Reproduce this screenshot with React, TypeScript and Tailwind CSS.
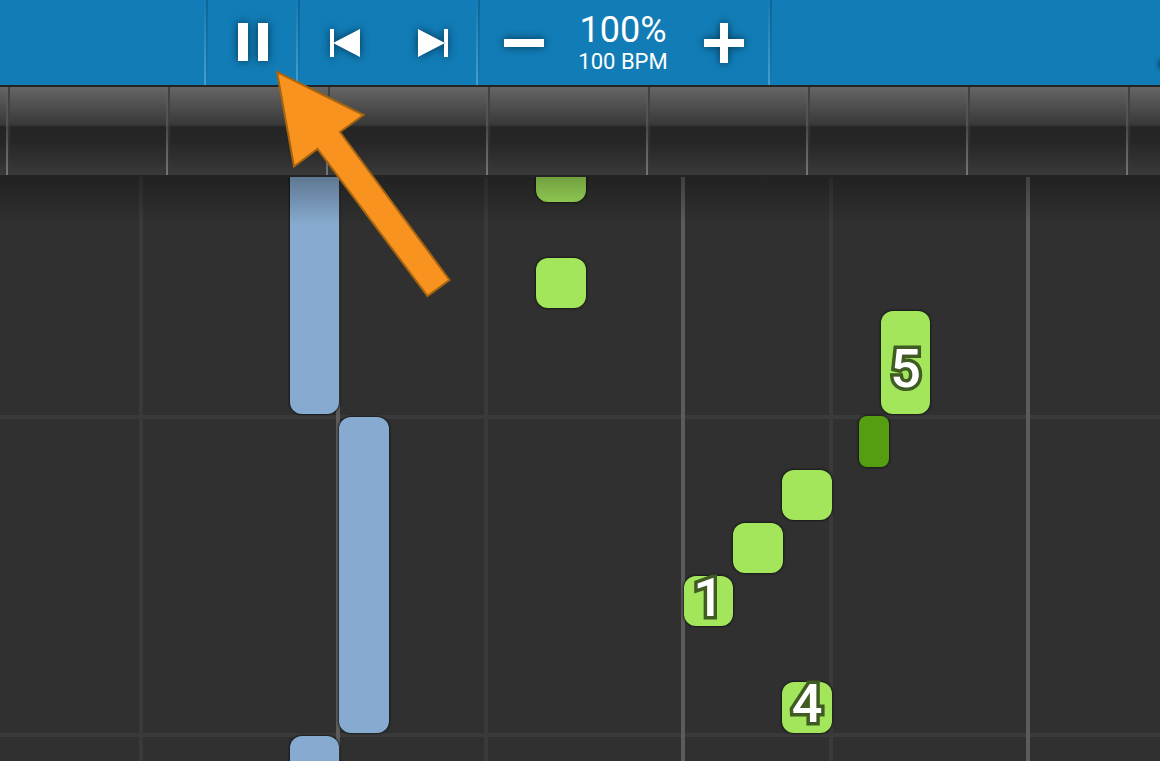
import type { ReactNode } from "react";

type Hand = "left" | "right" | "sharp";

interface Note {
  hand: Hand;
  x: number;
  y: number;
  w: number;
  h: number;
  finger?: string;
  fingerPad?: string;
}

const NOTES: Note[] = [
  { hand: "left", x: 290, y: -40, w: 49, h: 277 },
  { hand: "left", x: 339, y: 240, w: 50, h: 316 },
  { hand: "left", x: 290, y: 559, w: 49, h: 120 },
  { hand: "right", x: 536, y: -26, w: 50, h: 51 },
  { hand: "right", x: 536, y: 81, w: 50, h: 50 },
  { hand: "right", x: 881, y: 134, w: 49, h: 103, finger: "5", fingerPad: "pt-10" },
  { hand: "sharp", x: 859, y: 239, w: 30, h: 51 },
  { hand: "right", x: 782, y: 293, w: 50, h: 50 },
  { hand: "right", x: 733, y: 346, w: 50, h: 50 },
  { hand: "right", x: 684, y: 399, w: 49, h: 50, finger: "1", fingerPad: "pt-1" },
  { hand: "right", x: 782, y: 505, w: 50, h: 51, finger: "4", fingerPad: "pt-1" },
];

const NOTE_STYLE: Record<Hand, string> = {
  left: "rounded-xl bg-[#87abd0]",
  right: "rounded-xl bg-[#a3e65c]",
  sharp: "rounded-lg bg-[#559e11]",
};

const SHADOW = "drop-shadow-[0_0_4px_rgba(0,20,40,0.7)]";

function Divider() {
  return (
    <div className="flex w-1 shrink-0">
      <div className="w-0.5 bg-linear-to-b from-[#117cb5] to-[#4a9dca]" />
      <div className="w-0.5 bg-linear-to-b from-[#0c679b] to-[#117cb5]" />
    </div>
  );
}

function IconButton({
  label,
  className,
  children,
}: {
  label: string;
  className: string;
  children: ReactNode;
}) {
  return (
    <button
      type="button"
      aria-label={label}
      className={`flex h-full shrink-0 items-center justify-center ${className}`}
    >
      <svg
        viewBox="0 0 40 40"
        fill="white"
        shapeRendering="geometricPrecision"
        className={`size-10 overflow-visible ${SHADOW}`}
      >
        {children}
      </svg>
    </button>
  );
}

function Toolbar() {
  return (
    <header className="flex h-[85px] shrink-0 overflow-hidden bg-[#117cb5] pl-[204px] text-white">
      <Divider />
      <IconButton label="Pause" className="w-[88px] pr-px">
        <path d="M6 0h10v38H6zM26 0h10v38H26z" />
      </IconButton>
      <Divider />
      <IconButton label="Previous" className="w-[88px]">
        <path d="M6 6h4v28H6zM36 6v28L9 20z" />
      </IconButton>
      <IconButton label="Next" className="w-[88px]">
        <path d="M6 6v28l27-14zM32 6h4v28h-4z" />
      </IconButton>
      <Divider />
      <IconButton label="Slower" className="w-[88px]">
        <path d="M0 16h40v8H0z" />
      </IconButton>
      <div className="flex w-[112px] flex-col items-center pt-2 pr-0.5 font-['Roboto',sans-serif] whitespace-nowrap">
        <span className="text-4xl/11">100%</span>
        <span className="text-[22px]/5">100 BPM</span>
      </div>
      <IconButton label="Faster" className="w-[88px]">
        <path d="M16 0h8v16h16v8H24v16h-8V24H0v-8h16z" />
      </IconButton>
      <Divider />
      <div className="mt-[60px] -mr-2 ml-auto size-2 rounded-full shadow-[0_0_4px_2px_rgba(0,20,40,0.5)]" />
    </header>
  );
}

function Ruler() {
  return (
    <div className="flex h-[92px] shrink-0 overflow-hidden border-y-2 border-[#242424] bg-[linear-gradient(to_bottom,#656565_0px,#383838_38px,#252525_40px,#262626_54px,#393939_88px)]">
      <div className="w-1.5 shrink-0" />
      {Array.from({ length: 24 }, (_, i) => (
        <div key={i} className="flex w-40 shrink-0">
          <div className="w-0.5 bg-linear-to-b from-transparent to-[#737373]" />
          <div className="w-0.5 bg-linear-to-b from-[#404040] to-transparent" />
        </div>
      ))}
    </div>
  );
}

function GridLines() {
  return (
    <>
      <div className="absolute inset-0 flex flex-col overflow-hidden">
        <div className="h-[242px] shrink-0 border-b-4 border-[#3a3a3a]" />
        {Array.from({ length: 6 }, (_, i) => (
          <div key={i} className="h-[318px] shrink-0 border-b-4 border-[#3a3a3a]" />
        ))}
      </div>
      <div className="absolute inset-0 flex overflow-hidden">
        <div className="w-[139px] shrink-0" />
        {Array.from({ length: 12 }, (_, i) => (
          <div key={i} className="flex w-[345px] shrink-0">
            <div className="w-[197px] border-l-4 border-[#3a3a3a]" />
            <div className="w-[148px] border-l-4 border-[#5b5b5b]" />
          </div>
        ))}
      </div>
    </>
  );
}

function NoteBlock({ note }: { note: Note }) {
  return (
    <div
      className={`absolute flex justify-center shadow-[0_0_2px_1px_rgba(15,20,15,0.75)] ${NOTE_STYLE[note.hand]}`}
      style={{ left: note.x, top: note.y, width: note.w, height: note.h }}
    >
      {note.finger && (
        <span
          className={`font-['Roboto',sans-serif] text-[54px]/9 font-medium text-white [-webkit-text-stroke:7px_#405c24] [paint-order:stroke_fill] [stroke-linejoin:round] [text-shadow:0_0_2px_#405c24] ${note.fingerPad}`}
        >
          {note.finger}
        </span>
      )}
    </div>
  );
}

export default function App() {
  return (
    <div className="relative flex min-h-screen flex-col overflow-hidden bg-[#303030]">
      <Toolbar />
      <Ruler />
      <main className="relative flex-1 overflow-hidden">
        <GridLines />
        {NOTES.map((note, i) => (
          <NoteBlock key={i} note={note} />
        ))}
        <div className="absolute inset-x-0 top-0 h-12 bg-linear-to-b from-black/30 to-transparent" />
      </main>
      <svg
        aria-hidden="true"
        viewBox="0 0 180 232"
        className="pointer-events-none absolute top-[68px] left-[274px] h-[232px] w-[180px]"
      >
        <path
          d="M3 4 89.500 47 66 64 175.500 212 153.500 228 43.500 81 20 98.500Z"
          fill="#f7931e"
          stroke="#a5640f"
          strokeWidth="2"
        />
      </svg>
    </div>
  );
}
